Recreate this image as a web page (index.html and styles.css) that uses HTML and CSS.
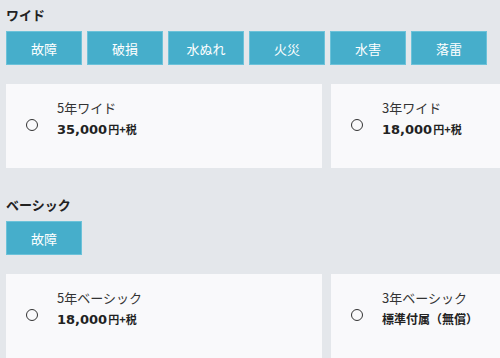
FILE: index.html
```html
<!DOCTYPE html>
<html lang="ja">
<head>
<meta charset="utf-8">
<link rel="stylesheet" href="styles.css">
</head>
<body>
<section class="section">
  <h2 class="title">ワイド</h2>
  <div class="tags">
    <span class="tag">故障</span>
    <span class="tag">破損</span>
    <span class="tag">水ぬれ</span>
    <span class="tag">火災</span>
    <span class="tag">水害</span>
    <span class="tag">落雷</span>
  </div>
  <div class="cards">
    <label class="card">
      <span class="radio"></span>
      <span class="info">
        <span class="name">5年ワイド</span>
        <span class="price">35,000<small>円+税</small></span>
      </span>
    </label>
    <label class="card">
      <span class="radio"></span>
      <span class="info">
        <span class="name">3年ワイド</span>
        <span class="price">18,000<small>円+税</small></span>
      </span>
    </label>
  </div>
</section>
<section class="section">
  <h2 class="title">ベーシック</h2>
  <div class="tags">
    <span class="tag">故障</span>
  </div>
  <div class="cards">
    <label class="card">
      <span class="radio"></span>
      <span class="info">
        <span class="name">5年ベーシック</span>
        <span class="price">18,000<small>円+税</small></span>
      </span>
    </label>
    <label class="card">
      <span class="radio"></span>
      <span class="info">
        <span class="name">3年ベーシック</span>
        <span class="price"><span class="free">標準付属（無償）</span></span>
      </span>
    </label>
  </div>
</section>
</body>
</html>
```
FILE: styles.css
```css
html, body {
  margin: 0;
  padding: 0;
  background: #e4e7eb;
  overflow: hidden;
}
body {
  width: 500px;
  font-family: "Noto Sans CJK JP", "Noto Sans", sans-serif;
  color: #333;
}
.section {
  padding: 5px 0 0 6px;
}
.section + .section {
  padding-top: 27px;
}
.title {
  margin: 0;
  font-size: 13px;
  line-height: 20px;
  font-weight: 700;
  color: #222;
}
.tags {
  display: flex;
  gap: 5px;
  margin-top: 6px;
}
.tag {
  width: 76px;
  height: 34px;
  box-sizing: border-box;
  display: flex;
  align-items: center;
  justify-content: center;
  background: #46aecb;
  border: 1px solid #6cc2d9;
  color: #fff;
  font-size: 13px;
}
.cards {
  display: flex;
  gap: 9px;
  margin-top: 19px;
  overflow: hidden;
}
.card {
  flex: 0 0 316px;
  height: 84px;
  box-sizing: border-box;
  background: #f9f9fb;
  display: flex;
  align-items: flex-start;
  padding: 13px 0 0 20px;
}
.radio {
  width: 12px;
  height: 12px;
  box-sizing: border-box;
  border: 1.5px solid #333;
  border-radius: 50%;
  margin-top: 22px;
  flex: 0 0 auto;
}
.info {
  display: flex;
  flex-direction: column;
  margin-left: 19px;
}
.name {
  font-size: 13px;
  line-height: 22px;
  color: #333;
}
.price {
  font-family: "DejaVu Sans", "Noto Sans CJK JP", sans-serif;
  font-size: 13px;
  line-height: 20px;
  font-weight: 700;
  color: #222;
}
.price small {
  font-family: "Noto Sans CJK JP", sans-serif;
  font-size: 11px;
  margin-left: 1px;
}
.free {
  font-family: "Noto Sans CJK JP", sans-serif;
  font-size: 12px;
}
```
